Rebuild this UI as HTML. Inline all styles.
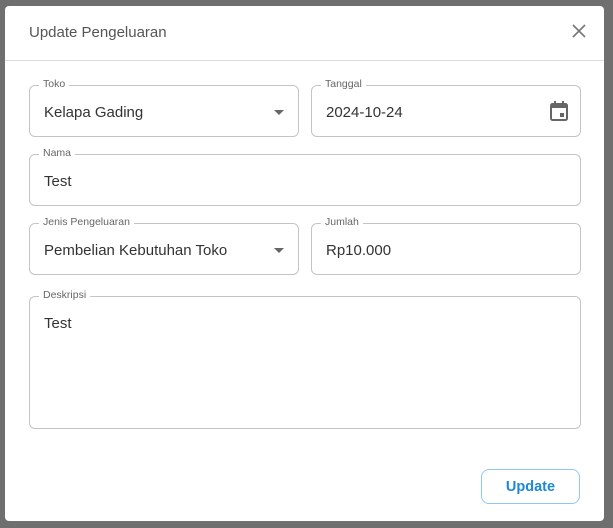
<!DOCTYPE html><html><head><style>
body{margin:0;width:613px;height:528px;background:#6f6f6f;font-family:"Liberation Sans",sans-serif;position:relative;overflow:hidden}
.dlg{position:absolute;left:5px;top:6px;width:599px;height:515px;background:#fff;border-radius:4px}
.title{position:absolute;left:24px;top:18px;font-size:15px;color:#555}
.hr{position:absolute;left:0;right:0;top:54px;border-top:1px solid #ddd}
.f{position:absolute;border:1px solid #c4c4c4;border-radius:6px;box-sizing:border-box}
.f label{position:absolute;top:-8px;left:9px;background:#fff;padding:0 4px;font-size:10.5px;color:#666}
.f .v{position:absolute;left:14px;top:18px;font-size:15px;color:#333}
.arr{position:absolute;right:14px;top:24px;border-left:5px solid transparent;border-right:5px solid transparent;border-top:5px solid #666}
.btn{position:absolute;left:476px;top:463px;width:99px;height:35px;box-sizing:border-box;border:1px solid #8ec8ef;border-radius:8px;color:#1e88d6;font-size:14.5px;font-weight:bold;text-align:center;line-height:35px}
</style></head><body>
<div class="dlg">
<div class="title">Update Pengeluaran</div>
<svg style="position:absolute;left:567px;top:18px" width="14" height="14"><path d="M1 1L13 13M13 1L1 13" stroke="#777" stroke-width="1.6"/></svg>
<div class="hr"></div>
<div class="f" style="left:24px;top:79px;width:270px;height:52px"><label>Toko</label><div class="v">Kelapa Gading</div><div class="arr"></div></div>
<div class="f" style="left:306px;top:79px;width:270px;height:52px"><label>Tanggal</label><div class="v">2024-10-24</div>
<svg style="position:absolute;right:12px;top:15px" width="18" height="20"><rect x="1" y="3" width="16" height="16" rx="1.5" fill="none" stroke="#666" stroke-width="2"/><rect x="1" y="3" width="16" height="4" fill="#666"/><rect x="4" y="0" width="2" height="4" fill="#666"/><rect x="12" y="0" width="2" height="4" fill="#666"/><rect x="10" y="12" width="4" height="4" fill="#666"/></svg></div>
<div class="f" style="left:24px;top:148px;width:552px;height:52px"><label>Nama</label><div class="v">Test</div></div>
<div class="f" style="left:24px;top:217px;width:270px;height:52px"><label>Jenis Pengeluaran</label><div class="v">Pembelian Kebutuhan Toko</div><div class="arr"></div></div>
<div class="f" style="left:306px;top:217px;width:270px;height:52px"><label>Jumlah</label><div class="v">Rp10.000</div></div>
<div class="f" style="left:24px;top:290px;width:552px;height:133px"><label>Deskripsi</label><div class="v" style="top:18px">Test</div></div>
<div class="btn">Update</div>
</div>
</body></html>
